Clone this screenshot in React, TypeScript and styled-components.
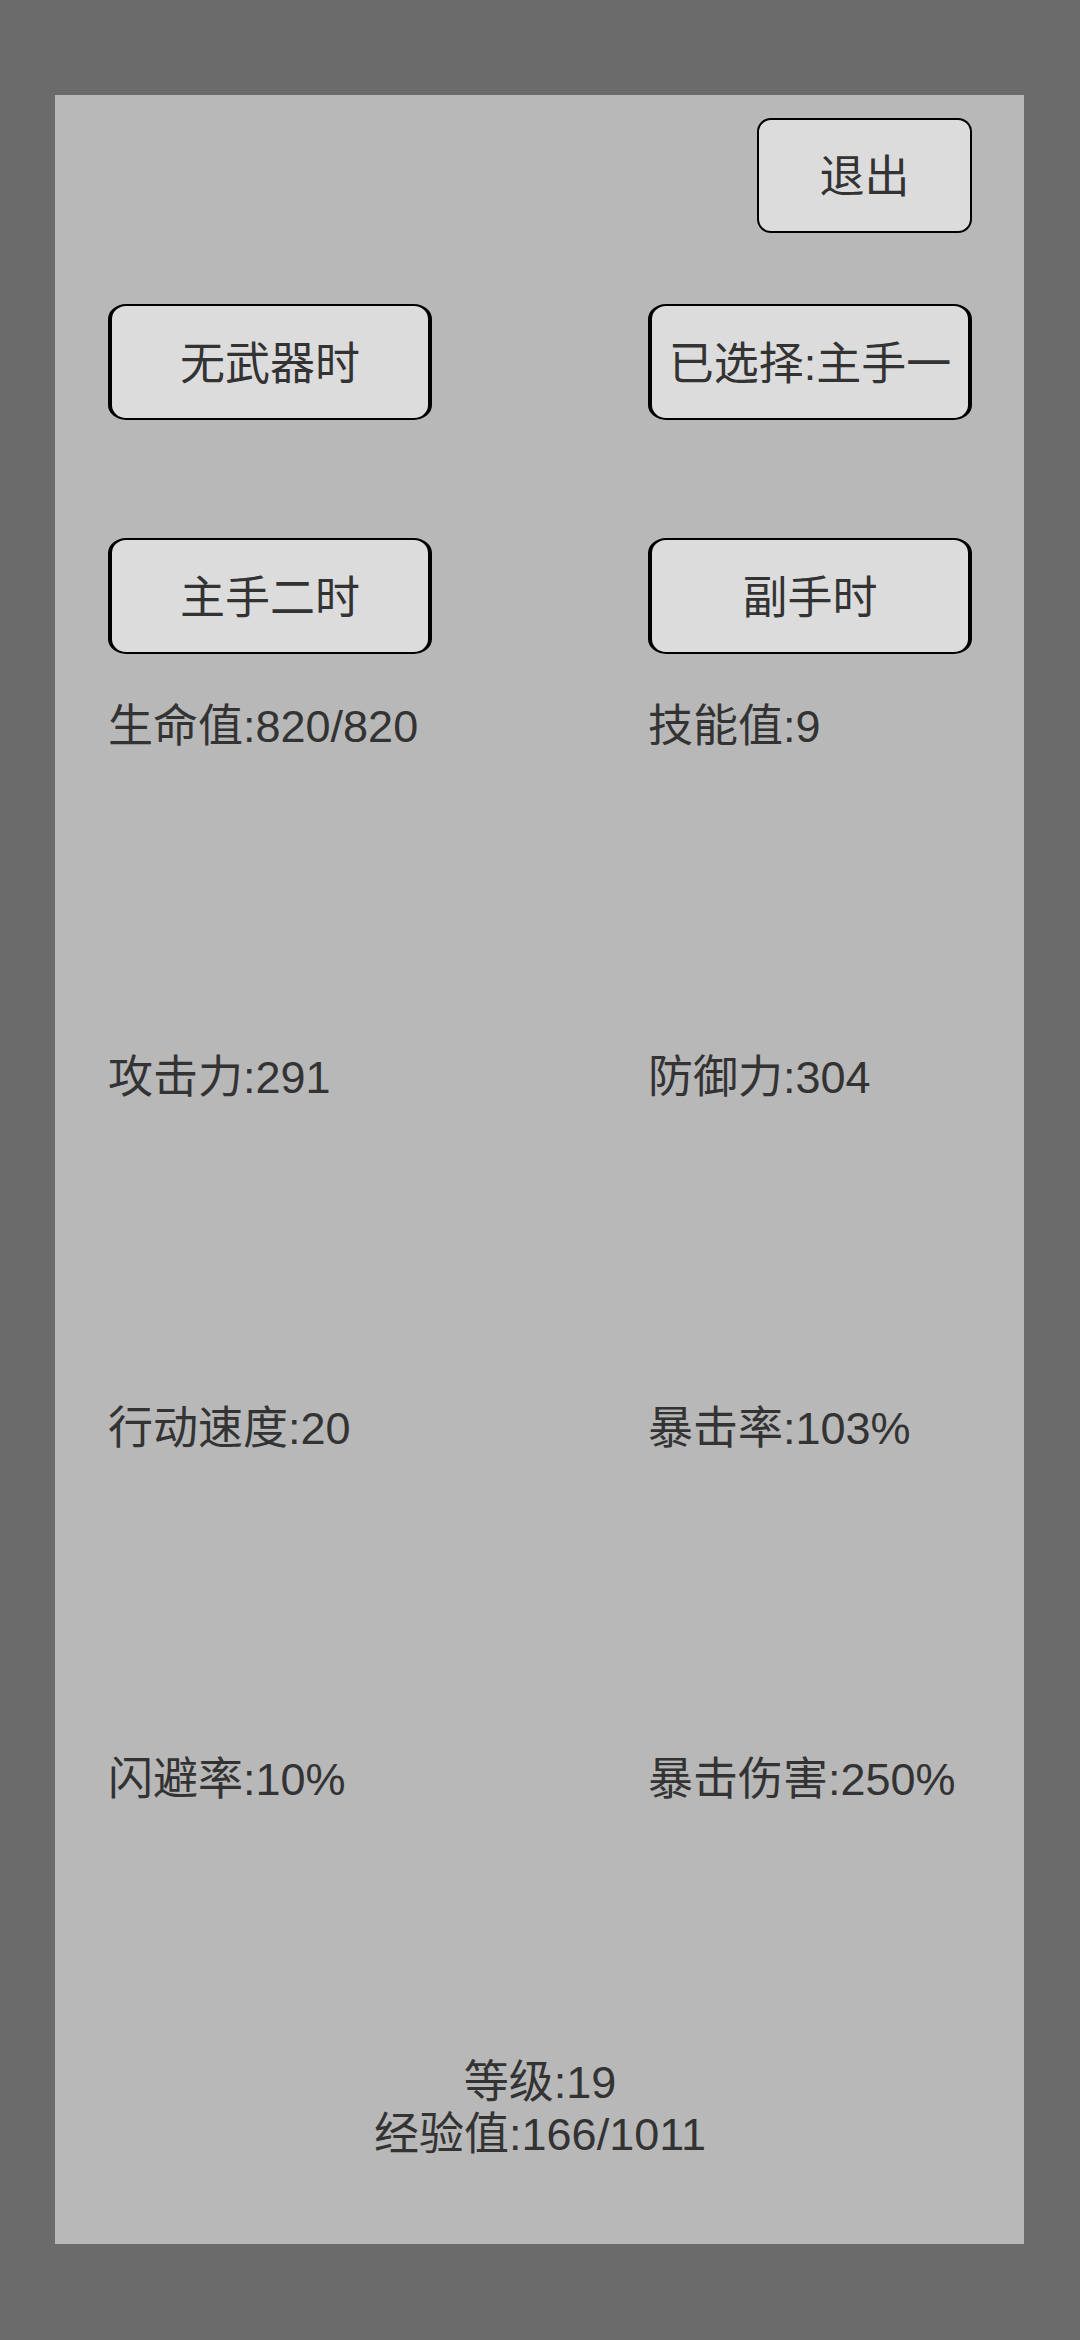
import React from "react";
import styled, { createGlobalStyle } from "styled-components";

const Global = createGlobalStyle`
  html, body {
    margin: 0;
    padding: 0;
    background: #6b6b6b;
  }
  body {
    font-family: "Liberation Sans", "Noto Sans CJK SC", sans-serif;
  }
`;

const Page = styled.div`
  min-height: 2340px;
  padding: 95px 0 0 55px;
  box-sizing: border-box;
`;

const Panel = styled.div`
  width: 969px;
  height: 2149px;
  box-sizing: border-box;
  background: #b8b8b8;
  padding: 23px 52px 83px 53px;
  display: flex;
  flex-direction: column;
  color: #333333;
  font-family: "Liberation Sans", "Noto Sans CJK SC", sans-serif;
`;

const TopBar = styled.div`
  display: flex;
  justify-content: flex-end;
`;

const ButtonBase = styled.button`
  box-sizing: border-box;
  background: #dcdcdc;
  color: #333333;
  border-style: solid;
  border-color: #000;
  font-family: "Liberation Sans", "Noto Sans CJK SC", sans-serif;
  font-size: 45px;
  padding: 0 0 4px 0;
  display: flex;
  align-items: center;
  justify-content: center;
  white-space: nowrap;
  cursor: pointer;
`;

const ExitButton = styled(ButtonBase)`
  width: 215px;
  height: 115px;
  border-width: 2px;
  border-radius: 14px;
`;

const ButtonGrid = styled.div`
  margin-top: 71px;
  display: grid;
  grid-template-columns: 324px 324px;
  justify-content: space-between;
  row-gap: 118px;
`;

const ModeButton = styled(ButtonBase)`
  width: 324px;
  height: 116px;
  border-width: 2.5px 4px;
  border-radius: 18px / 15px;
`;

const StatGrid = styled.div`
  margin-top: 47px;
  display: grid;
  grid-template-columns: 324px 324px;
  justify-content: space-between;
  grid-auto-rows: 52px;
  row-gap: 299px;
`;

const Stat = styled.div`
  font-size: 45px;
  line-height: 52px;
  white-space: nowrap;
`;

const Footer = styled.div`
  margin-top: auto;
  display: flex;
  flex-direction: column;
  align-items: center;
`;

const FooterLine = styled.div`
  font-size: 45px;
  line-height: 52px;
  white-space: nowrap;
`;

const modes = ["无武器时", "已选择:主手一", "主手二时", "副手时"];

const stats = [
  "生命值:820/820",
  "技能值:9",
  "攻击力:291",
  "防御力:304",
  "行动速度:20",
  "暴击率:103%",
  "闪避率:10%",
  "暴击伤害:250%",
];

export default function App() {
  return (
    <>
      <Global />
      <Page>
        <Panel>
          <TopBar>
            <ExitButton>退出</ExitButton>
          </TopBar>
          <ButtonGrid>
            {modes.map((m) => (
              <ModeButton key={m}>{m}</ModeButton>
            ))}
          </ButtonGrid>
          <StatGrid>
            {stats.map((s) => (
              <Stat key={s}>{s}</Stat>
            ))}
          </StatGrid>
          <Footer>
            <FooterLine>等级:19</FooterLine>
            <FooterLine>经验值:166/1011</FooterLine>
          </Footer>
        </Panel>
      </Page>
    </>
  );
}
